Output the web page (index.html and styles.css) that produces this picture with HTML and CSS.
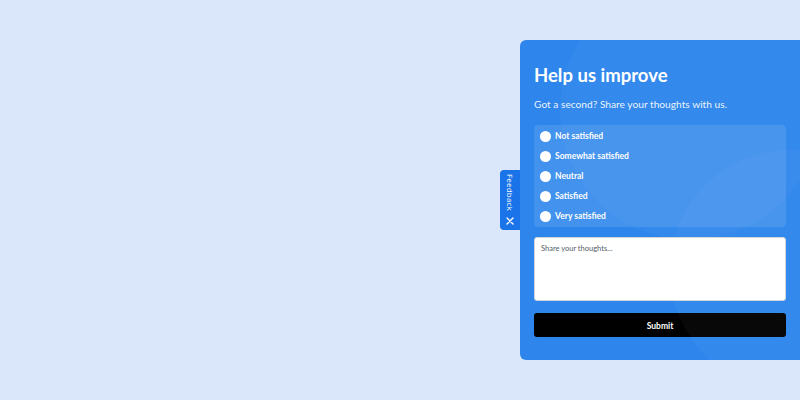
FILE: index.html
```html
<!DOCTYPE html>
<html lang="en">
<head>
  <meta charset="UTF-8">
  <meta name="viewport" content="width=device-width, initial-scale=1.0">
  <title>Feedback</title>
  <link rel="stylesheet" href="styles.css">
</head>
<body>
  <div class="widget">
    <button class="tab" type="button">
      <span class="tab-label">Feedback</span>
      <svg class="tab-close" width="8" height="8" viewBox="0 0 8 8">
        <path d="M1 1L7 7M7 1L1 7" stroke="#fff" stroke-width="1.4" stroke-linecap="round"/>
      </svg>
    </button>

    <form class="panel">
      <h1>Help us improve</h1>
      <p class="lead">Got a second? Share your thoughts with us.</p>

      <div class="choices">
        <label class="choice"><input type="radio" name="rating"><span>Not satisfied</span></label>
        <label class="choice"><input type="radio" name="rating"><span>Somewhat satisfied</span></label>
        <label class="choice"><input type="radio" name="rating"><span>Neutral</span></label>
        <label class="choice"><input type="radio" name="rating"><span>Satisfied</span></label>
        <label class="choice"><input type="radio" name="rating"><span>Very satisfied</span></label>
      </div>

      <textarea class="thoughts" placeholder="Share your thoughts..."></textarea>
      <button class="submit" type="submit">Submit</button>
    </form>
  </div>
</body>
</html>
```

FILE: styles.css
```css
html, body {
  height: 100%;
}
body {
  margin: 0;
  background-color: #dae7fa;
  font-family: Lato, "Open Sans", sans-serif;
}
.widget {
  height: 100%;
  display: flex;
  justify-content: flex-end;
  align-items: center;
}
.tab {
  width: 20px;
  height: 60px;
  padding: 4px 0 5px;
  border: none;
  border-radius: 4px 0 0 4px;
  background-color: #1a73e8;
  color: #fff;
  display: flex;
  flex-direction: column;
  align-items: center;
  justify-content: space-between;
  cursor: pointer;
}
.tab-label {
  writing-mode: vertical-rl;
  font-family: "Open Sans", sans-serif;
  font-size: 8px;
  letter-spacing: 0.2px;
}
.panel {
  position: relative;
  overflow: hidden;
  width: 280px;
  height: 320px;
  box-sizing: border-box;
  padding: 23px 14px 23px;
  border-radius: 6px 0 0 6px;
  background-color: #2e86ec;
  color: #fff;
  display: flex;
  flex-direction: column;
}
/* soft circles in the background */
.panel::before,
.panel::after {
  content: "";
  position: absolute;
  border-radius: 50%;
  background-color: rgba(255, 255, 255, 0.03);
  pointer-events: none;
}
.panel::before {
  width: 260px;
  height: 260px;
  left: 40px;
  top: -60px;
}
.panel::after {
  width: 240px;
  height: 240px;
  left: 150px;
  top: 110px;
}
.panel > * {
  position: relative;
}
h1 {
  margin: 0;
  font-size: 18.5px;
  line-height: 24px;
  font-weight: 700;
}
.lead {
  margin: 9px 0 0;
  font-size: 10.2px;
  line-height: 16px;
  color: rgba(255, 255, 255, 0.92);
}
.choices {
  margin-top: 13px;
  padding: 1px 6px 1px;
  border-radius: 4px;
  background-color: rgba(255, 255, 255, 0.1);
}
.choice {
  height: 20px;
  display: flex;
  align-items: center;
  gap: 4px;
  font-size: 8.5px;
  font-weight: 700;
  cursor: pointer;
}
.choice input {
  appearance: none;
  margin: 0;
  width: 11px;
  height: 11px;
  border-radius: 50%;
  background-color: #fff;
}
.thoughts {
  margin-top: 10px;
  height: 64px;
  box-sizing: border-box;
  padding: 6px;
  border: 1px solid #d0d5dc;
  border-radius: 3px;
  font-family: Lato, sans-serif;
  font-size: 7.5px;
  resize: none;
}
.thoughts::placeholder {
  color: #555d68;
}
.submit {
  margin-top: 12px;
  height: 24px;
  padding: 1px 0 0;
  border: none;
  border-radius: 3px;
  background-color: #000;
  color: #fff;
  font-family: Lato, sans-serif;
  font-size: 8.5px;
  font-weight: 700;
  cursor: pointer;
}
```
